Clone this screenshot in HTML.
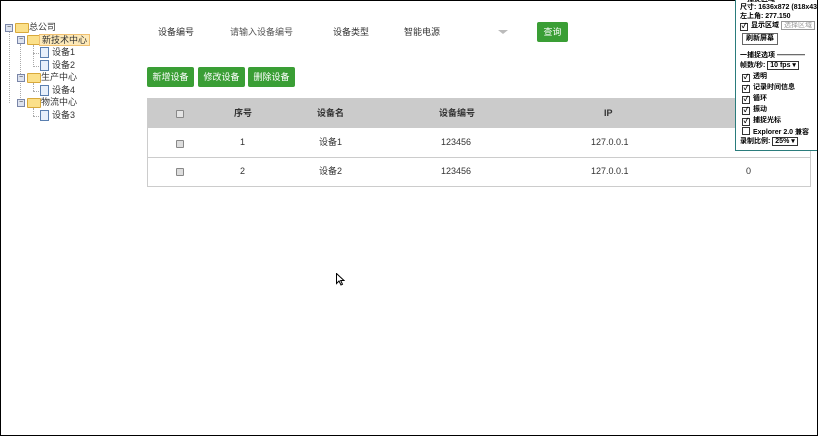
<!DOCTYPE html>
<html><head><meta charset="utf-8"><style>
body{margin:0;width:818px;height:436px;overflow:hidden;background:#fff;font-family:"Liberation Sans","Noto Sans CJK SC",sans-serif;font-size:9px;line-height:11px;color:#333;position:relative}
.frame{position:absolute;left:0;top:0;width:816px;height:434px;border:1px solid #000}
.a{position:absolute;white-space:nowrap}
.btn{position:absolute;background:#3a9e35;color:#fff;font-size:9px;text-align:center;border-radius:2px}
.cb{position:absolute;width:6px;height:6px;border:1px solid #888;background:#ddd;border-radius:1px}
.fold{position:absolute;width:12px;height:8px;background:#fbe08a;border:1px solid #d9a93a;border-radius:1px}
.doc{position:absolute;width:7px;height:9px;background:#e8f0fb;border:1px solid #5a7fb0}
.mn{position:absolute;width:6px;height:6px;border:1px solid #7a86a8;background:#dde3f0;font-size:7px;line-height:6px;text-align:center}
.ln{position:absolute;border-left:1px dotted #aaa}
.lh{position:absolute;border-top:1px dotted #aaa}
.t{position:absolute;white-space:nowrap;font-size:9px;line-height:11px;color:#333}
.p{position:absolute;font-size:7px;line-height:10px;color:#000;font-weight:bold;white-space:nowrap}
.chk{display:inline-block;width:6px;height:6px;border:1px solid #333;margin-right:3px;vertical-align:-1px;font-size:7px;line-height:6px;text-align:center}
</style></head><body>
<div class="frame"></div>
<!-- tree -->
<div class="ln" style="left:9px;top:31px;height:72px"></div>
<div class="ln" style="left:20px;top:44px;height:60px"></div>
<div class="ln" style="left:33px;top:45px;height:22px"></div>
<div class="ln" style="left:33px;top:83px;height:8px"></div>
<div class="ln" style="left:33px;top:108px;height:8px"></div>
<div class="mn" style="left:5px;top:24px">−</div><div class="fold" style="left:15px;top:23px"></div><div class="t" style="left:29px;top:22px">总公司</div>
<div class="mn" style="left:17px;top:36px">−</div><div class="fold" style="left:27px;top:35px"></div><div class="t" style="left:39px;top:34px;background:#fde9b8;border:1px solid #f0c070;padding:0 2px;line-height:10px">新技术中心</div>
<div class="lh" style="left:33px;top:53px;width:6px"></div><div class="doc" style="left:40px;top:47px"></div><div class="t" style="left:52px;top:47px">设备1</div>
<div class="lh" style="left:33px;top:66px;width:6px"></div><div class="doc" style="left:40px;top:60px"></div><div class="t" style="left:52px;top:60px">设备2</div>
<div class="mn" style="left:17px;top:74px">−</div><div class="fold" style="left:27px;top:73px"></div><div class="t" style="left:41px;top:72px">生产中心</div>
<div class="lh" style="left:33px;top:91px;width:6px"></div><div class="doc" style="left:40px;top:85px"></div><div class="t" style="left:52px;top:85px">设备4</div>
<div class="mn" style="left:17px;top:99px">−</div><div class="fold" style="left:27px;top:98px"></div><div class="t" style="left:41px;top:97px">物流中心</div>
<div class="lh" style="left:33px;top:116px;width:6px"></div><div class="doc" style="left:40px;top:110px"></div><div class="t" style="left:52px;top:110px">设备3</div>
<!-- search -->
<div class="t" style="left:158px;top:27px">设备编号</div>
<div class="t" style="left:230px;top:27px;color:#555">请输入设备编号</div>
<div class="t" style="left:333px;top:27px">设备类型</div>
<div class="t" style="left:404px;top:27px">智能电源</div>
<div class="a" style="left:498px;top:30px;width:0;height:0;border-left:5px solid transparent;border-right:5px solid transparent;border-top:4px solid #bbb"></div>
<div class="btn" style="left:537px;top:22px;width:31px;height:20px;line-height:20px">查询</div>
<div class="btn" style="left:147px;top:67px;width:47px;height:20px;line-height:20px">新增设备</div>
<div class="btn" style="left:198px;top:67px;width:47px;height:20px;line-height:20px">修改设备</div>
<div class="btn" style="left:248px;top:67px;width:47px;height:20px;line-height:20px">删除设备</div>
<!-- table -->
<div class="a" style="left:147px;top:98px;width:663px;height:30px;background:#cbcbcb"></div>
<div class="a" style="left:147px;top:98px;width:662px;height:88px;border:1px solid #ccc;border-top:none"></div>
<div class="a" style="left:147px;top:157px;width:663px;height:1px;background:#ccc"></div>
<div class="cb" style="left:176px;top:110px;background:#e4e4e4"></div>
<div class="t" style="left:234px;top:108px;font-weight:bold">序号</div>
<div class="t" style="left:317px;top:108px;font-weight:bold">设备名</div>
<div class="t" style="left:439px;top:108px;font-weight:bold">设备编号</div>
<div class="t" style="left:604px;top:108px;font-weight:bold">IP</div>
<div class="cb" style="left:176px;top:140px"></div>
<div class="t" style="left:240px;top:137px">1</div>
<div class="t" style="left:319px;top:137px">设备1</div>
<div class="t" style="left:441px;top:137px">123456</div>
<div class="t" style="left:591px;top:137px">127.0.0.1</div>
<div class="cb" style="left:176px;top:168px"></div>
<div class="t" style="left:240px;top:166px">2</div>
<div class="t" style="left:319px;top:166px">设备2</div>
<div class="t" style="left:441px;top:166px">123456</div>
<div class="t" style="left:591px;top:166px">127.0.0.1</div>
<div class="t" style="left:746px;top:166px">0</div>
<!-- cursor -->
<svg class="a" style="left:336px;top:273px" width="9" height="13"><path d="M0.5 0.5V10.5L3 8L5 12L6.5 11.3L4.7 7.5H8Z" fill="#fff" stroke="#000" stroke-width="1"/></svg>
<!-- panel -->
<div class="a" style="left:735px;top:0;width:81px;height:150px;background:#fff;border-left:1px solid #2a7c7c;border-bottom:1px solid #2a7c7c;overflow:hidden">
<div class="p" style="left:4px;top:-5px">一捕捉区域</div>
<div class="p" style="left:4px;top:3px">尺寸: 1636x872 (818x436</div>
<div class="p" style="left:4px;top:12px">左上角: 277.150</div>
<div class="p" style="left:4px;top:21px"><span class="chk">✓</span>显示区域 <span style="border:1px solid #999;color:#999;padding:0 2px;font-weight:normal">选择区域</span></div>
<div class="p" style="left:6px;top:33px;border:1px solid #666;padding:0 3px">刷新屏幕</div>
<div class="p" style="left:4px;top:51px">一捕捉选项 ————</div>
<div class="p" style="left:4px;top:61px">帧数/秒: <span style="border:1px solid #333;padding:0 2px">10 fps ▾</span></div>
<div class="p" style="left:6px;top:72px"><span class="chk">✓</span>透明</div>
<div class="p" style="left:6px;top:83px"><span class="chk">✓</span>记录时间信息</div>
<div class="p" style="left:6px;top:94px"><span class="chk">✓</span>循环</div>
<div class="p" style="left:6px;top:105px"><span class="chk">✓</span>振动</div>
<div class="p" style="left:6px;top:116px"><span class="chk">✓</span>捕捉光标</div>
<div class="p" style="left:6px;top:127px"><span class="chk"></span>Explorer 2.0 兼容</div>
<div class="p" style="left:4px;top:137px">录制比例: <span style="border:1px solid #333;padding:0 2px">25% ▾</span></div>
</div>
</body></html>
